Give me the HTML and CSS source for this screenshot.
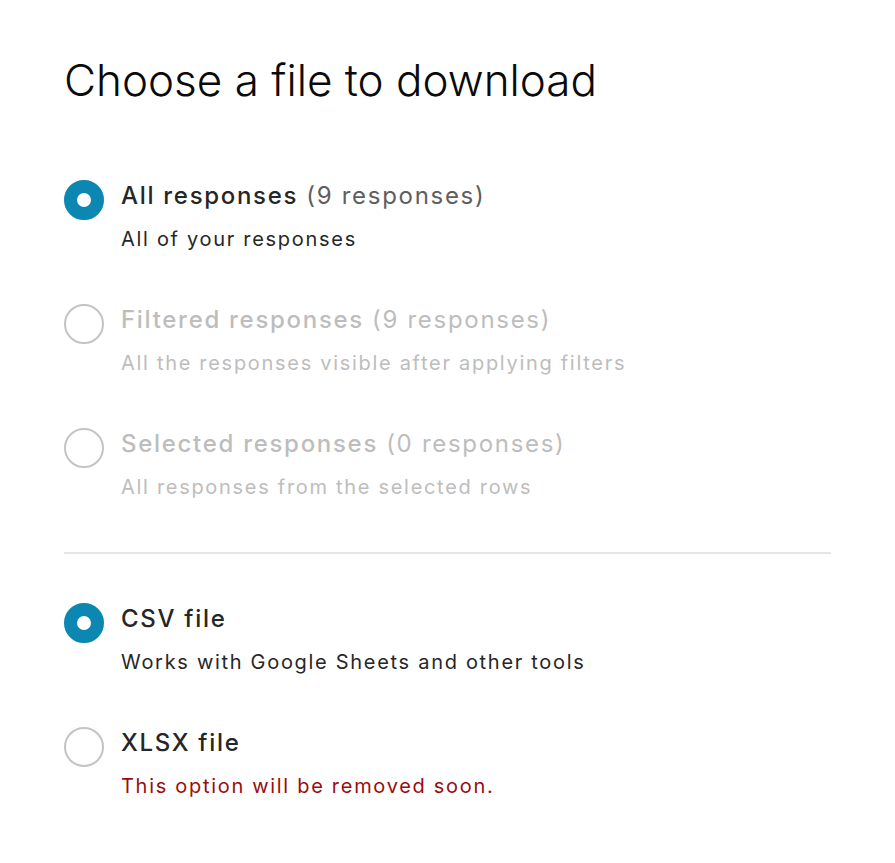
FILE: index.html
```html
<html lang="en">
<head>
    <meta charset="UTF-8">
    <meta name="viewport" content="width=device-width, initial-scale=1.0">
    <title>Choose a file to download</title>
    <link rel="stylesheet" href="styles.css">
</head>
<body>
    <div class="dialog">
        <h1 class="title">Choose a file to download</h1>

        <div class="group">
            <label class="option">
                <input type="radio" name="scope" checked>
                <span class="radio"></span>
                <span class="text">
                    <span class="label">All responses <span class="count">(9 responses)</span></span>
                    <span class="desc">All of your responses</span>
                </span>
            </label>
            <label class="option disabled">
                <input type="radio" name="scope" disabled>
                <span class="radio"></span>
                <span class="text">
                    <span class="label">Filtered responses <span class="count">(9 responses)</span></span>
                    <span class="desc">All the responses visible after applying filters</span>
                </span>
            </label>
            <label class="option disabled">
                <input type="radio" name="scope" disabled>
                <span class="radio"></span>
                <span class="text">
                    <span class="label">Selected responses <span class="count">(0 responses)</span></span>
                    <span class="desc">All responses from the selected rows</span>
                </span>
            </label>
        </div>

        <hr class="divider">

        <div class="group">
            <label class="option">
                <input type="radio" name="format" checked>
                <span class="radio"></span>
                <span class="text">
                    <span class="label">CSV file</span>
                    <span class="desc">Works with Google Sheets and other tools</span>
                </span>
            </label>
            <label class="option">
                <input type="radio" name="format">
                <span class="radio"></span>
                <span class="text">
                    <span class="label">XLSX file</span>
                    <span class="desc warning">This option will be removed soon.</span>
                </span>
            </label>
        </div>
    </div>
</body>
</html>
```

FILE: styles.css
```css
body {
    margin: 0;
    background: #fff;
    font-family: 'Inter', 'Noto Sans', sans-serif;
    color: #262627;
}
.dialog {
    width: 767px;
    padding: 52px 0 0 64px;
}
.title {
    margin: 0 0 72px;
    font-size: 44px;
    line-height: 56px;
    font-weight: 300;
    color: #0a0a0a;
}
.group {
    display: flex;
    flex-direction: column;
    gap: 49px;
}
.option {
    display: flex;
    align-items: flex-start;
    gap: 17px;
    cursor: pointer;
}
.option input {
    display: none;
}
.radio {
    flex: none;
    width: 40px;
    height: 40px;
    box-sizing: border-box;
    border-radius: 50%;
    border: 2px solid #c4c4c4;
    background: #fff;
}
.option input:checked + .radio {
    border: 13px solid #0b87b1;
}
.text {
    display: flex;
    flex-direction: column;
    gap: 11px;
    letter-spacing: 1.7px;
}
.label {
    font-size: 24px;
    line-height: 32px;
    font-weight: 500;
    color: #262627;
}
.count {
    font-weight: 400;
    color: #5e5e5e;
}
.desc {
    font-size: 20px;
    line-height: 32px;
    color: #262627;
}
.warning {
    color: #990d0d;
}
.disabled {
    cursor: default;
}
.disabled .label,
.disabled .count,
.disabled .desc {
    color: #bdbdbd;
}
.divider {
    margin: 49px 0;
    border: none;
    height: 2px;
    background: #e5e5e5;
}
```
